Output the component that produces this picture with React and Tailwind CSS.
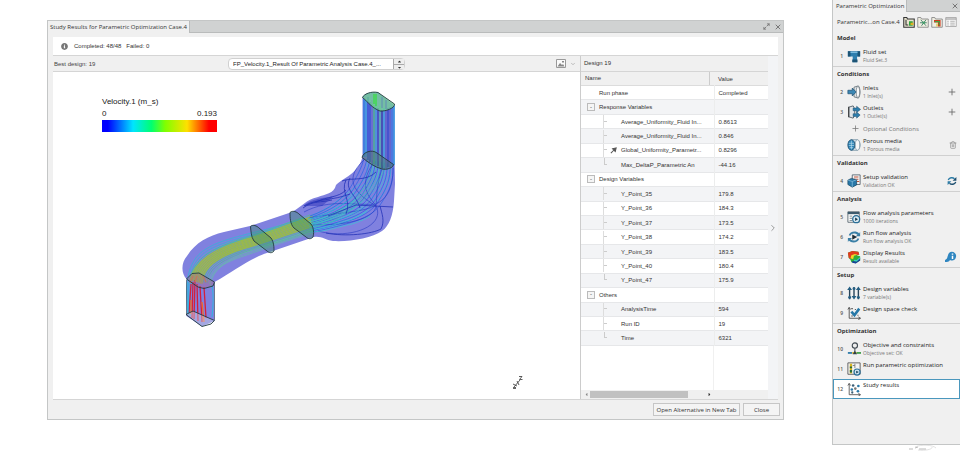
import { useState } from 'react';
import clsx from 'clsx';
//icons
import { FaInfoCircle, FaCaretUp, FaCaretDown, FaCaretLeft, FaCaretRight } from 'react-icons/fa';
import { X, Plus, Trash2, ChevronDown, ChevronRight, Maximize2 } from 'lucide-react';

const rows = [
    { name: 'Run phase', value: 'Completed', level: 0 },
    { name: 'Response Variables', group: true },
    { name: 'Average_Uniformity_Fluid In...', value: '0.8613', level: 1 },
    { name: 'Average_Uniformity_Fluid In...', value: '0.846', level: 1 },
    { name: 'Global_Uniformity_Parametr...', value: '0.8296', level: 1, objective: true },
    { name: 'Max_DeltaP_Parametric An', value: '-44.16', level: 1, last: true },
    { name: 'Design Variables', group: true },
    { name: 'Y_Point_35', value: '179.8', level: 1 },
    { name: 'Y_Point_36', value: '184.3', level: 1 },
    { name: 'Y_Point_37', value: '173.5', level: 1 },
    { name: 'Y_Point_38', value: '174.2', level: 1 },
    { name: 'Y_Point_39', value: '183.5', level: 1 },
    { name: 'Y_Point_40', value: '180.4', level: 1 },
    { name: 'Y_Point_47', value: '175.9', level: 1, last: true },
    { name: 'Others', group: true },
    { name: 'AnalysisTime', value: '594', level: 1 },
    { name: 'Run ID', value: '19', level: 1 },
    { name: 'Time', value: '6321', level: 1, last: true },
];

const sections = [
    { title: 'Model', items: [
        { n: 1, icon: 'fluid', name: 'Fluid set', sub: 'Fluid Set.3' },
    ] },
    { title: 'Conditions', items: [
        { n: 2, icon: 'inlet', name: 'Inlets', sub: '1 Inlet(s)', action: 'add' },
        { n: 3, icon: 'outlet', name: 'Outlets', sub: '1 Outlet(s)', action: 'add' },
        { optional: true, name: 'Optional Conditions' },
        { icon: 'porous', name: 'Porous media', sub: '1 Porous media', action: 'delete' },
    ] },
    { title: 'Validation', items: [
        { n: 4, icon: 'validation', name: 'Setup validation', sub: 'Validation OK', action: 'update' },
    ] },
    { title: 'Analysis', items: [
        { n: 5, icon: 'params', name: 'Flow analysis parameters', sub: '1000 iterations' },
        { n: 6, icon: 'run', name: 'Run flow analysis', sub: 'Run flow analysis OK' },
        { n: 7, icon: 'results', name: 'Display Results', sub: 'Result available', action: 'info' },
    ] },
    { title: 'Setup', items: [
        { n: 8, icon: 'variables', name: 'Design variables', sub: '7 variable(s)' },
        { n: 9, icon: 'space', name: 'Design space check' },
    ] },
    { title: 'Optimization', items: [
        { n: 10, icon: 'objective', name: 'Objective and constraints', sub: 'Objective set: OK' },
        { n: 11, icon: 'optimize', name: 'Run parametric optimization' },
        { n: 12, icon: 'study', name: 'Study results' },
    ] },
];

const iconShapes = {
    fluid: <>
        <path d="M1 2.5h14v6h-3.5v6.5h-5V8.500H1z" fill="#2f7fae" />
        <path d="M1 2.500h3v6H1zM12 2.500h3v6h-3zM6 12h6v3H6z" fill="#1d5475" />
        <path d="M4 4h8" stroke="#7dbddf" strokeWidth="1.2" />
    </>,
    inlet: <>
        <path d="M8 2.500 13 1c2.500 3 2.500 11 0 14l-5-1.500z" fill="#e3e7ea" stroke="#66727a" />
        <ellipse cx="12.500" cy="8" rx="2" ry="6.500" fill="#fafafa" stroke="#66727a" strokeWidth=".8" />
        <path d="M1 6h5V3.500L10.500 8 6 12.500V10H1z" fill="#3c87b4" stroke="#1d4f70" strokeWidth=".8" />
    </>,
    outlet: <>
        <path d="M2 2.500 7 1c2.500 3 2.500 11 0 14l-5-1.500z" fill="#dfe4e8" stroke="#4f5c66" />
        <path d="M2 2v12" stroke="#333" strokeWidth="1.200" />
        <path d="M7 3.500h4V1.500L15.500 5 11 8.500V6.500H7zM7 10h4V8l4 3.500-4 3.500v-2H7z" fill="#2f7fae" stroke="#1d4f70" strokeWidth=".6" />
    </>,
    porous: <>
        <path d="M5 2h7c4 2 4 10 0 12H5z" fill="#e6f0f6" stroke="#7893a3" />
        <ellipse cx="5" cy="8" rx="4" ry="6" fill="#2f86b8" stroke="#1d4f70" />
        <path d="M2 6h6M2 8.500h6M3 11h4M5 3v10" stroke="#b8dcee" strokeWidth=".8" />
        <ellipse cx="12" cy="8" rx="2.500" ry="6" fill="#f8f8f8" stroke="#7893a3" strokeWidth=".8" />
    </>,
    validation: <>
        <path d="M6 1h9v11H6z" fill="#f5f5f5" stroke="#56646e" />
        <path d="M8 3.500h5M8 6h5M11 8.500h3" stroke="#c0573d" strokeWidth="1.200" />
        <path d="m1 7 4-2 6 1.500v6L6 15l-5-3z" fill="#2878a8" stroke="#174764" strokeWidth=".8" />
        <path d="m1 7 5 1.500 5-2M6 8.500V15" stroke="#8fc6e2" strokeWidth=".8" fill="none" />
    </>,
    params: <>
        <path d="M1 2h13v12H1z" fill="#fafafa" stroke="#57656e" />
        <path d="M1 3.500h13" stroke="#3d5b6d" strokeWidth="2.500" />
        <path d="M3 7h3M3 9.500h3M3 12h3M8 7h4" stroke="#75838c" />
        <circle cx="10.500" cy="10.500" r="4" fill="#d8e9f2" stroke="#296f98" strokeWidth="1.500" />
        <path d="m9.300 8.500 3.200 2-3.200 2z" fill="#17384c" />
    </>,
    run: <>
        <path d="M2 6c1-4 8-6 12-2l1-2v5h-5l2-1.500C9 3 5 3.500 4 6.500zM14 10c-1 4-8 6-12 2l-1 2V9h5l-2 1.500c3 2.500 7 2 8-1z" fill="#3a7fa6" />
        <path d="m6 5 5.500 3L6 11z" fill="#1d2c35" />
    </>,
    // deformed blob coloured from blue to red
    results: <>
        <path d="M1 3 6 1l7 1 1 3-3 1 4 1v5l-5 3-5-1-1-3-2-2z" fill="#2fae3a" />
        <path d="M1 3 6 1l7 1 1 3-3 1-2-1-4 1-1 4-2-1z" fill="#e23a1e" />
        <path d="M5 6l4-1.500 3 1-4 1-1 4-3-1z" fill="#f5d327" />
        <path d="M6 12.500 11 13l4-4v3l-5 3.500-4-1z" fill="#183f9c" />
        <path d="M8 11l3 .5 4-3.500v1.800L11 13l-3-.5z" fill="#38c9c4" />
    </>,
    variables: <>
        <path d="M3 4v11M8 1v11M13 4v11" stroke="#29455a" strokeWidth="1.600" />
        <path d="m3 .5 2.800 4H.200zM8 15.500l2.800-4H5.200zM13 .5l2.800 4h-5.600z" fill="#245e82" />
        <circle cx="3" cy="13" r="1.700" fill="#245e82" /><circle cx="13" cy="13" r="1.700" fill="#245e82" />
        <circle cx="8" cy="3" r="1.700" fill="#245e82" />
    </>,
    space: <>
        <path d="M2.500 2v12H15M1 4l1.500-2.500L4 4M13 12.500l2.500 1.500-2.500 1.500" stroke="#4a4a4a" fill="none" />
        <path d="m5 6.500 3.500 4L14 3" stroke="#2778a7" strokeWidth="3" fill="none" />
        <path d="M5 3h1.500M9 4h1M12 10.500h1M5 11.500h1.500" stroke="#333" strokeWidth="1.200" />
    </>,
    objective: <>
        <circle cx="9" cy="4" r="3" fill="#eee" stroke="#414b52" strokeWidth="1.300" />
        <path d="M9 7v5" stroke="#414b52" strokeWidth="1.200" />
        <path d="M1 12.500h5" stroke="#2878a8" strokeWidth="2" />
        <path d="M6 12.500h5" stroke="#e2b21e" strokeWidth="2" />
        <path d="M11 12.500h5" stroke="#3b9d49" strokeWidth="2" />
        <path d="m9 10 2.500 4h-5z" fill="#2d3d47" />
    </>,
    optimize: <>
        <path d="M1 1h14v13H1z" fill="#f4f4f4" stroke="#555" />
        <path d="M4.500 2v11" stroke="#d8b61f" strokeWidth="2.600" />
        <path d="M4.500 5v2M4.500 9v3" stroke="#296b3b" strokeWidth="2.600" />
        <path d="M9 2v5M6.500 4H9" stroke="#777" />
        <circle cx="11.500" cy="11.500" r="3.500" fill="#cfe4ef" stroke="#2c7099" strokeWidth="1.400" />
        <path d="m10.500 10 3 1.500-3 1.500z" fill="#174058" />
    </>,
    study: <>
        <path d="M2.500 2v12.500H15M1 4l1.500-2.500L4 4M13 13l2.500 1.500-2.500 1.500" stroke="#555" fill="none" />
        <circle cx="7" cy="4" r="1.500" fill="#3c5f76" /><circle cx="13" cy="4.500" r="1.500" fill="#2878a8" />
        <circle cx="5.500" cy="8.500" r="1.500" fill="#2878a8" /><circle cx="9.500" cy="7.500" r="1.500" fill="#777" />
        <circle cx="6" cy="12" r="1.300" fill="#3c5f76" /><circle cx="12.500" cy="10.500" r="1.500" fill="#2878a8" />
    </>,
    update: <>
        <path d="M2 6.500C3.500 2.500 9 1.500 12 4.500" stroke="#2b7ba6" strokeWidth="2.200" />
        <path d="M15 1.500V7.500H9z" fill="#1d4f70" />
        <path d="M14 9.500C12.500 13.500 7 14.500 4 11.500" stroke="#1d4f70" strokeWidth="2.200" />
        <path d="M1 14.500V8.500H7z" fill="#2b7ba6" />
    </>,
    // small tool bar on top of the panel
    tree: <>
        <path d="M1 2h4l1 2h9v11H1z" fill="#e8e4cf" stroke="#333" strokeWidth="1.400" />
        <path d="M4 5v7h3" stroke="#333" fill="none" strokeWidth="1.400" />
        <path d="M8 7h5v6H8z" fill="#2fa33d" /><path d="M10 9h4v3h-4z" fill="#e0b020" />
    </>,
    mesh: <>
        <path d="M1 2h4l1 2h9v11H1z" fill="#f0eee2" stroke="#777" />
        <path d="m5 5 7 8M12 5l-6 8M4 9h9" stroke="#3b7d67" strokeWidth="1.200" />
        <circle cx="9" cy="9" r="1.800" fill="#47a06b" />
    </>,
    flow: <>
        <path d="M1 2h4l1 2h9v11H1z" fill="#f0eee2" stroke="#777" />
        <path d="M4 7h7v7" stroke="#d33a22" strokeWidth="3.500" fill="none" />
        <path d="M5 7.500h6v5" stroke="#3fa943" strokeWidth="1.400" fill="none" />
        <path d="M8 10v4" stroke="#e2c32a" strokeWidth="1.500" />
    </>,
    list: <>
        <path d="M1 2h14v12H1z" fill="#fafafa" stroke="#999" />
        <path d="M1 4h14" stroke="#999" strokeWidth="1.500" />
        <path d="M3 7h2M3 9.500h2M3 12h2M7 7h6M7 9.500h6M7 12h6" stroke="#999" />
    </>,
};

const Icon = ({ name, className }) => (
    <svg viewBox="0 0 16 16" className={className} fill="none" aria-hidden="true">{iconShapes[name]}</svg>
);

// n curves lying between two cubic chains with the same number of points
const bundle = (a, b, n) => Array.from({ length: n }, (_, i) => {
    const t = n === 1 ? 0 : i / (n - 1);
    const p = a.map((v, k) => (v + (b[k] - v) * t).toFixed(1));
    return `M${p[0]} ${p[1]}C${p.slice(2).join(' ')}`;
});

const streams = [
    // inlet bend and straight part
    { color: '#35b6d8', width: 1, paths: bundle([188, 313, 186, 290, 184, 262, 206, 249, 226, 236, 262, 233, 304, 218], [190, 316, 191, 290, 188, 266, 208, 253, 228, 241, 262, 236, 306, 221], 3) },
    { color: '#4cc48c', width: 0.9, paths: bundle([190, 281, 192, 259, 213, 248, 238, 240, 262, 233, 284, 224, 310, 215], [207, 283, 209, 267, 224, 259, 248, 251, 268, 245, 290, 239, 314, 230], 10) },
    { color: '#a8c02f', width: 1.1, paths: bundle([190, 280, 195, 260, 216, 249, 240, 241, 262, 235, 284, 226, 313, 216], [202, 284, 202, 266, 222, 255, 246, 248, 266, 242, 290, 234, 314, 226], 9) },
    { color: '#62c8a0', width: 0.7, paths: bundle([210, 288, 212, 268, 226, 262, 244, 256, 270, 247, 288, 240, 313, 233], [208, 281, 214, 266, 228, 260, 244, 253, 270, 244, 288, 238, 313, 229], 3) },
    // spreading in the chamber
    { color: '#35c8d4', width: 0.8, paths: bundle([310, 216, 326, 211, 343, 197, 358, 185, 372, 176, 365, 167, 368, 157], [312, 230, 340, 228, 364, 216, 376, 202, 388, 190, 391, 180, 391, 164], 9) },
    { color: '#2a62e8', width: 0.9, paths: bundle([310, 216, 330, 209, 342, 199, 350, 188, 356, 178, 362, 168, 364, 158], [314, 232, 346, 224, 372, 220, 382, 202, 390, 190, 394, 180, 393, 165], 11) },
    { color: '#2336c4', width: 0.7, paths: bundle([304, 212, 330, 198, 356, 206, 376, 204, 386, 199, 393, 190, 393, 168], [318, 231, 350, 240, 386, 226, 376, 206, 360, 196, 340, 182, 364, 160], 4) },
    { color: '#35c8d4', width: 0.9, paths: bundle([308, 219, 322, 217, 334, 210, 346, 202, 350, 199, 352, 196, 354, 193], [310, 232, 326, 232, 340, 226, 352, 224, 358, 222, 364, 220, 370, 216], 6) },
    { color: '#43c3ae', width: 0.8, paths: bundle([312, 221, 338, 213, 350, 206, 360, 193, 372, 178, 371, 172, 374, 161], [314, 227, 342, 222, 364, 200, 374, 188, 382, 176, 384, 172, 384, 164], 4) },
];

const strayLines = [
    'M326 233C346 237 372 234 381 229C385 221 382 214 380 206',
    'M304 206C318 198 332 201 350 194M303 208C314 200 320 203 332 200',
    'M342 181C352 177 366 182 376 172M346 180C340 192 352 200 346 214M350 178C344 190 356 194 360 208',
    'M328 216L356 205L393 207M316 202C328 196 338 198 346 190',
];

const risers = [
    [364, 99, 157, '#1a7fe0'], [366, 100, 157, '#23a5df'], [368, 97, 160, '#2344cf'], [370, 102, 162, '#2344cf'],
    [372, 100, 163, '#5d62c8'], [374, 105, 164, '#39b77b'], [376, 103, 165, '#2d9fd8'], [378, 108, 166, '#2b38b6'],
    [380, 106, 168, '#4ab6a0'], [382, 110, 168, '#22329c'], [384, 108, 168, '#2ba7dd'], [386, 110, 168, '#5054c4'],
    [388, 108, 167, '#2336c4'], [390, 107, 167, '#5054c4'], [392, 107, 166, '#2c72e0'], [394, 106, 165, '#1a9ae0'],
];

const FlowPlot = () => (
    <svg viewBox="182 88 345 306" width="345" height="306" fill="none" role="img" aria-label="Velocity streamlines" className="absolute left-[129px] top-4">
        <path d="M362.500 97C365 93 371 91.500 378 92.500L394.700 105.500V165L395 184L394 201C393 216 389 226 382 231C372 238 350 242 333 241C325 240 322 236 314 237L270 252C250 258 236 270 214.500 282V321L202 326.500L186.500 316V279C181 273 181 263 187 256C196 242 208 236 224 232L250 226L292 212C303 206 305 200 318 197C325 194 334 194 336 185C343 178 358 174 362.500 157Z" fill="#8081df" />
        <path d="M303 206C314 197 322 199 334 196L322 206Z" fill="#3b3fc0" opacity=".6" />
        {streams.map((s, i) =>
            <g key={i} stroke={s.color} strokeWidth={s.width} opacity=".8">
                {s.paths.map(d => <path key={d} d={d} />)}
            </g>
        )}
        <g stroke="#2231b8" strokeWidth=".8">{strayLines.map(d => <path key={d} d={d} />)}</g>
        {risers.map(([x, y1, y2, color]) => <path key={x} d={`M${x} ${y1}V${y2}`} stroke={color} strokeWidth="1.200" />)}
        {/* hot lines at the inlet */}
        <g stroke="#d51f3c" strokeWidth="1.300">
            <path d="M191 284L189 313M193 282L192 318M195 280L194 319M197 284L198 321M200 286L202 322M204 287L206 318" />
            <path d="M191 300V314M202 302L204 322" stroke="#ef6a2a" />
            <path d="M193 276L190 283M197 276L195 282M203 276L206 282" stroke="#c98550" />
        </g>
        <path d="M188 282V314M212 285C214 297 213 306 212 317" stroke="#2fb6e0" />
        <g stroke="#223a40" strokeWidth=".9">
            <path d="M362.500 97.500C364 94 371 91 378 92.500L394.500 104C395 108 386 111.500 380 111C372 108 368 102 362.500 97.500Z" fill="#6fd88a" fillOpacity=".7" />
            <path d="M374 94V104M376 94V106" stroke="#3fdc4a" strokeWidth="1.400" />
            <path d="M382 97V108M386 100V109" stroke="#5f86b8" />
            <path d="M362 157.500C363 152 372 149 377 153L393.500 164.500C393 168 387 170 382 169C374 167 368 162 362 157.500Z" fill="#4d746c" fillOpacity=".5" />
            <path d="M250.500 226.500C253 224 257 226 259 228L271 238C274 242 274 248 274 251C272 253.500 269 253 267 251L254 241C251 237 251 231 250.500 226.500Z" fill="#3d8f66" fillOpacity=".4" />
            <path d="M290 212.500C293 210 297 212 299 214L311 224C314 228 314 234 313 237C311 239.500 308 239 306 237L294 228C290 224 290 217 290 212.500Z" fill="#3d8f66" fillOpacity=".4" />
            <path d="M186.500 279L192 273.500L199 273L214.500 282L213 286L204 288.500L198 287Z" fill="#b4607a" fillOpacity=".35" />
            <path d="M186 314.500L193 311L214.500 320.500L211 324L202 326.500Z" fill="#d9e0e6" fillOpacity=".4" />
            <path d="M186.500 280V315M214.500 283V320" strokeOpacity=".6" />
        </g>
        {/* axis triad */}
        <g stroke="#333" strokeWidth=".8">
            <path d="M514 387L520 380M517 381L519 385M513 384L517 386M519 376.500H522L519.500 379.500H522.500" />
            <path d="M513 388H516" strokeWidth="1.500" />
        </g>
    </svg>
);

const ResultsTable = () => (
    <table className="h-[274px] w-full table-fixed border-collapse text-left text-[#333]">
        <colgroup>
            <col />
            <col className="w-[54px]" />
        </colgroup>
        <thead>
            <tr className="border-b border-[#dcdcdc] bg-[#f0f0f0]">
                <th className="p-0 pl-1 font-normal"><span className="mr-1 block h-[13px] border-r border-[#ccc] leading-[13px]">Name</span></th>
                <th className="p-0 pl-1 font-normal">Value</th>
            </tr>
        </thead>
        <tbody>
            {rows.map((row, i) =>
                <tr key={row.name + i} className="border-b border-[#e6e7e9] even:bg-[#f3f4f6]">
                    <td className="whitespace-nowrap border-r border-[#eceded] p-0">
                        {row.group ?
                        <div className="flex h-[13px] items-center gap-1 pl-1.5">
                            <button aria-label={`Collapse ${row.name}`} className="h-2 w-2 border border-[#bbb] bg-[#f5f5f5] text-center leading-[5px]">-</button>
                            {row.name}
                        </div>
                        : row.level === 0 ?
                        <div className="flex h-[13px] items-center pl-[18px]">{row.name}</div>
                        :
                        <div className="flex h-[13px] items-center pl-[22px]">
                            <span className={clsx('flex w-1 flex-col self-stretch border-l', row.last ? 'border-transparent' : 'border-[#ddd]')}>
                                <span className={clsx('h-1/2 border-b border-[#ccc]', row.last && 'border-l')} />
                            </span>
                            <span className="flex w-[14px] items-center">
                                {row.objective &&
                                <svg viewBox="0 0 8 8" className="ml-[3px] h-[7px] w-[7px]"><path d="M1 7l3-3M3 2l4-1-1 4z" stroke="#555" strokeWidth="1.200" fill="#555" /></svg>}
                            </span>
                            {row.name}
                        </div>}
                    </td>
                    <td className="p-0 pl-1">{row.value}</td>
                </tr>
            )}
        </tbody>
    </table>
);

const StudyWindow = () => (
    <section className="flex min-w-0 flex-1 flex-col border border-[#c4c6c6] bg-[#f0f0f0]">
        <header className="flex h-3 items-stretch bg-[#d0d2d2]">
            <h1 className="bg-[#f0f0f0] px-0.5 font-['Open_Sans',sans-serif] leading-3 text-[#333]">Study Results for Parametric Optimization Case.4</h1>
            <div className="flex flex-1 items-center justify-end gap-1 border-b border-l border-[#b9bbbb] pr-px text-[#777]">
                <button aria-label="Maximize"><Maximize2 className="h-[7px] w-[7px] stroke-3" /></button>
                <button aria-label="Close window"><X className="h-2 w-2 stroke-3" /></button>
            </div>
        </header>

        <div className="mx-[5px] mt-1 flex h-[19px] items-center gap-1.5 border-b border-[#d5d5d5] bg-white pl-2 text-[#333]">
            <FaInfoCircle className="h-[7px] w-[7px] text-[#777]" />
            <p className="whitespace-pre">Completed: 48/48   Failed: 0</p>
        </div>

        <div className="mx-[5px] flex h-[344px] border-b border-[#d5d5d5]">
            <div className="flex min-w-0 flex-1 flex-col">
                <div className="flex h-4 items-center border-b border-[#d5d5d5] pr-1 text-[#444]">
                    <p className="w-[175px] pl-px">Best design: 19</p>
                    <div className="flex h-3 w-[177px] rounded-sm border border-[#d0d0d0] bg-white">
                        <select aria-label="Displayed result" className="min-w-0 flex-1 appearance-none pl-1 text-[#222]">
                            <option>FP_Velocity.1_Result Of Parametric Analysis Case.4_...</option>
                        </select>
                        <div className="flex w-[11px] flex-col border-l border-[#aaa] bg-[#eee] text-[#333]">
                            <button aria-label="Previous result" className="flex flex-1 items-center justify-center border-b border-[#aaa]"><FaCaretUp className="h-[5px] w-[5px]" /></button>
                            <button aria-label="Next result" className="flex flex-1 items-center justify-center"><FaCaretDown className="h-[5px] w-[5px]" /></button>
                        </div>
                    </div>
                    <button aria-label="Image options" className="ml-auto flex items-center gap-1 text-[#888]">
                        <svg viewBox="0 0 10 9" className="h-[9px] w-[10px]"><path d="M.5.5h9v8h-9z" fill="#fafafa" stroke="#999" /><path d="M1.500 7.500 4 4l2 2 1-1 1.500 2.500zM6 2h2v1.500H6z" fill="#888" /></svg>
                        <ChevronDown className="h-1.5 w-1.5" />
                    </button>
                </div>
                <div className="relative flex-1 bg-white pl-[49px] pt-6">
                    <FlowPlot />
                    <div className="w-[115px] text-[8px] leading-3 text-[#222]">
                        <p>Velocity.1 (m_s)</p>
                        <p className="flex justify-between"><span>0</span><span>0.193</span></p>
                        <div className="h-3 bg-[linear-gradient(90deg,#00f_5%,#00e5ff_27%,#00ff70_43%,#80ff00_55%,#ffe000_74%,#f00_93%)]" />
                    </div>
                </div>
            </div>

            <aside className="flex w-[188px] flex-col border-l border-[#ccc] bg-white">
                <h2 className="h-4 border-b border-[#d5d5d5] bg-[#f0f0f0] pl-[3px] leading-[15px] text-[#333]">Design 19</h2>
                <ResultsTable />
                <div className="flex flex-1">
                    <div className="flex-1 border-r border-[#f0f0f0]" />
                    <div className="w-[54px]" />
                </div>
                <div className="flex h-[9px] items-center bg-[#f0f0f0] pl-[3px] text-[#333]">
                    <FaCaretLeft className="h-[5px] w-[5px] text-[#888]" />
                    <div className="ml-px h-[7px] w-[98px] bg-[#c1c1c1]" />
                    <FaCaretRight className="ml-[19px] h-[5px] w-[5px]" />
                </div>
            </aside>
            <button aria-label="Hide details" className="flex w-2.5 items-center justify-center bg-[#f3f4f6] text-[#888]">
                <ChevronRight className="h-2.5 w-2.5" />
            </button>
        </div>

        <footer className="flex h-[19px] items-center justify-end gap-[3px] px-[3px] font-['Open_Sans',sans-serif] text-[#333]">
            <button className="h-[13px] w-[87px] border border-[#c6c6c6] bg-[#f4f4f4]">Open Alternative in New Tab</button>
            <button className="h-[13px] w-[37px] border border-[#c6c6c6] bg-[#f4f4f4]">Close</button>
        </footer>
    </section>
);

const StepAction = ({ type }) => (
    <>
        {type === 'add' && <button aria-label="Add"><Plus className="h-2.5 w-2.5 text-[#666]" /></button>}
        {type === 'delete' && <button aria-label="Delete"><Trash2 className="h-2 w-2 text-[#888]" /></button>}
        {type === 'update' && <button aria-label="Update"><Icon name="update" className="h-2.5 w-2.5" /></button>}
        {type === 'info' &&
        <button aria-label="Result information">
            <svg viewBox="0 0 12 12" className="h-3 w-3"><path d="M0 9c3-1 2-4 4-7 3-3 8 0 7 4-1 4-4 4-6 3-1 2-3 2-5 2z" fill="#2f86c0" /><path d="M7.500 2.500v1.200M7.500 4.800V8" stroke="#fff" strokeWidth="1.500" /></svg>
        </button>}
    </>
);

const Step = ({ step, active, onSelect }) => {
    if (step.optional) {
        return (
            <button className="flex h-[13px] w-full items-center pl-[18px] text-[#777]">
                <Plus className="mr-[3px] h-[9px] w-[9px]" />{step.name}
            </button>
        )
    }
    return (
        <div className={clsx('flex h-5 items-center border pr-0.5', active ? 'border-[#4a97bd] bg-white' : 'border-transparent')}>
            <button onClick={() => onSelect(step.name)} className="flex min-w-0 flex-1 items-center text-left">
                <span className="w-[13px] pr-1 text-right text-[5px] font-semibold text-[#555]">{step.n}</span>
                <Icon name={step.icon} className="h-3.5 w-3.5 shrink-0" />
                <span className="ml-0.5 h-4 whitespace-nowrap">
                    <span className="block text-[#222]">{step.name}</span>
                    <span className="block text-[5px] text-[#777]">{step.sub}</span>
                </span>
            </button>
            <StepAction type={step.action} />
        </div>
    )
}

const AssistantPanel = () => {
    const [current, setCurrent] = useState('Study results');

    return (
        <nav aria-label="Parametric Optimization" className="w-32 shrink-0 self-start border-b border-l border-[#c4c6c6] bg-[#f0f0f0] pb-[45px] font-['Open_Sans',sans-serif]">
            <div className="flex h-3 bg-[#d0d2d2]">
                <h1 className="w-[73px] bg-[#f0f0f0] pl-[3px] leading-3 text-[#333]">Parametric Optimization</h1>
                <div className="flex flex-1 items-center justify-end border-b border-l border-[#b9bbbb] pr-px text-[#777]">
                    <button aria-label="Close panel"><X className="h-2 w-2 stroke-3" /></button>
                </div>
            </div>
            <div className="flex h-[19px] items-center justify-between pl-1 pr-[3px]">
                <p className="text-[#333]">Parametric...on Case.4</p>
                <div className="flex gap-0.5">
                    {['tree', 'mesh', 'flow', 'list'].map(name =>
                        <button key={name} aria-label={name}><Icon name={name} className="h-3 w-3" /></button>
                    )}
                </div>
            </div>
            {sections.map(section =>
                <section key={section.title} className="border-t border-[#d0d0d0] first-of-type:border-t-0">
                    <h2 className="h-[15px] pl-1 pt-[3px] font-bold text-[#333]">{section.title}</h2>
                    {section.items.map(step =>
                        <Step key={step.name} step={step} active={step.name === current} onSelect={setCurrent} />
                    )}
                </section>
            )}
        </nav>
    )
}

export default function App() {
    return (
        <main className="flex min-h-screen items-start gap-12 bg-white pl-[47px] font-['Liberation_Sans',sans-serif] text-[6px] leading-2">
            <div className="flex min-w-0 flex-1 pt-5">
                <StudyWindow />
            </div>
            <div className="flex flex-col">
                <AssistantPanel />
                <svg viewBox="0 0 30 8" className="ml-19 h-2 w-[30px]" aria-hidden="true">
                    <path d="M7 2C14-1 25 0 28 3M10 5C18 6 25 4 24 2" stroke="#e2e2e2" fill="none" />
                    <path d="M1 4h4M7 3l3-1M11 4h7" stroke="#bbb" />
                </svg>
            </div>
        </main>
    )
}
